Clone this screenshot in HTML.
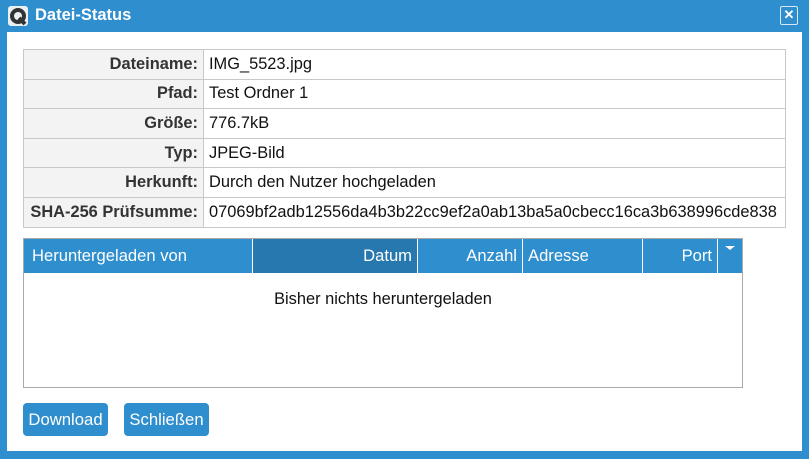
<!DOCTYPE html>
<html><head><meta charset="utf-8"><style>
*{box-sizing:border-box;margin:0;padding:0}
body{width:809px;height:459px;background:#2f8ecd;font-family:"Liberation Sans",sans-serif;position:relative;overflow:hidden}
.title{position:absolute;left:35px;top:6px;color:#fff;font-weight:bold;font-size:16.5px}
.logo{position:absolute;left:8px;top:6px;width:20px;height:20px;background:#e8f0f6;border-radius:3px}
.close{position:absolute;left:780px;top:6px;width:18px;height:19px;border:1.5px solid #d6e8f5;border-radius:2px;color:#fff;font-weight:bold;font-size:13px;text-align:center;line-height:15px}
.content{position:absolute;left:7px;top:32px;width:795px;height:419px;background:#fff}
table.info{position:absolute;left:23px;top:49px;width:763px;border-collapse:collapse;font-size:16.4px;table-layout:fixed}
table.info td{border:1px solid #c8c8c8;height:29.6px;padding:0 5px;color:#111;white-space:nowrap;overflow:hidden}
table.info td.l{width:180px;text-align:right;font-weight:bold;color:#333;background:#f3f3f3;padding:0 5px 0 0}
table.info td.v{padding:0 0 0 5px}
.grid{position:absolute;left:23px;top:238px;width:720px;height:150px;border:1px solid #aaa}
.hdr{position:absolute;left:0;top:0;height:34px;background:#2f8ecd;color:#fff;font-size:16.6px;line-height:34px}
.c{position:absolute;top:0;height:34px;padding:0 5px;border-right:1px solid #fff;white-space:nowrap}
.empty{position:absolute;top:51px;width:100%;text-align:center;font-size:16.4px;color:#111}
.btn{position:absolute;top:403px;height:33px;background:#2f8ecd;color:#fff;font-size:16.7px;line-height:33px;text-align:center;border-radius:4px}
</style></head><body>
<div class="logo"><svg width="20" height="20"><circle cx="10" cy="10" r="6" fill="none" stroke="#333" stroke-width="4"/><path d="M11 12 L17 18" stroke="#333" stroke-width="4"/></svg></div>
<div class="title">Datei-Status</div>
<div class="close">✕</div>
<div class="content"></div>
<table class="info">
<tr><td class="l">Dateiname:</td><td class="v">IMG_5523.jpg</td></tr>
<tr><td class="l">Pfad:</td><td class="v">Test Ordner 1</td></tr>
<tr><td class="l">Größe:</td><td class="v">776.7kB</td></tr>
<tr><td class="l">Typ:</td><td class="v">JPEG-Bild</td></tr>
<tr><td class="l">Herkunft:</td><td class="v">Durch den Nutzer hochgeladen</td></tr>
<tr><td class="l">SHA-256 Prüfsumme:</td><td class="v">07069bf2adb12556da4b3b22cc9ef2a0ab13ba5a0cbecc16ca3b638996cde838</td></tr>
</table>
<div class="grid">
<div class="hdr" style="width:718px">
<div class="c" style="left:0;width:229px;padding-left:8px">Heruntergeladen von</div>
<div class="c" style="left:229px;width:165px;text-align:right;background:#2878b0">Datum</div>
<div class="c" style="left:394px;width:105px;text-align:right">Anzahl</div>
<div class="c" style="left:499px;width:120px">Adresse</div>
<div class="c" style="left:619px;width:75px;text-align:right">Port</div>
<div class="c" style="left:694px;width:24px;border:0"><svg width="12" height="10" style="position:absolute;left:6px;top:5px"><path d="M1 2 L11 2 L6 6Z" fill="#fff"/></svg></div>
</div>
<div class="empty">Bisher nichts heruntergeladen</div>
</div>
<div class="btn" style="left:23px;width:85px">Download</div>
<div class="btn" style="left:124px;width:85px">Schließen</div>
</body></html>
